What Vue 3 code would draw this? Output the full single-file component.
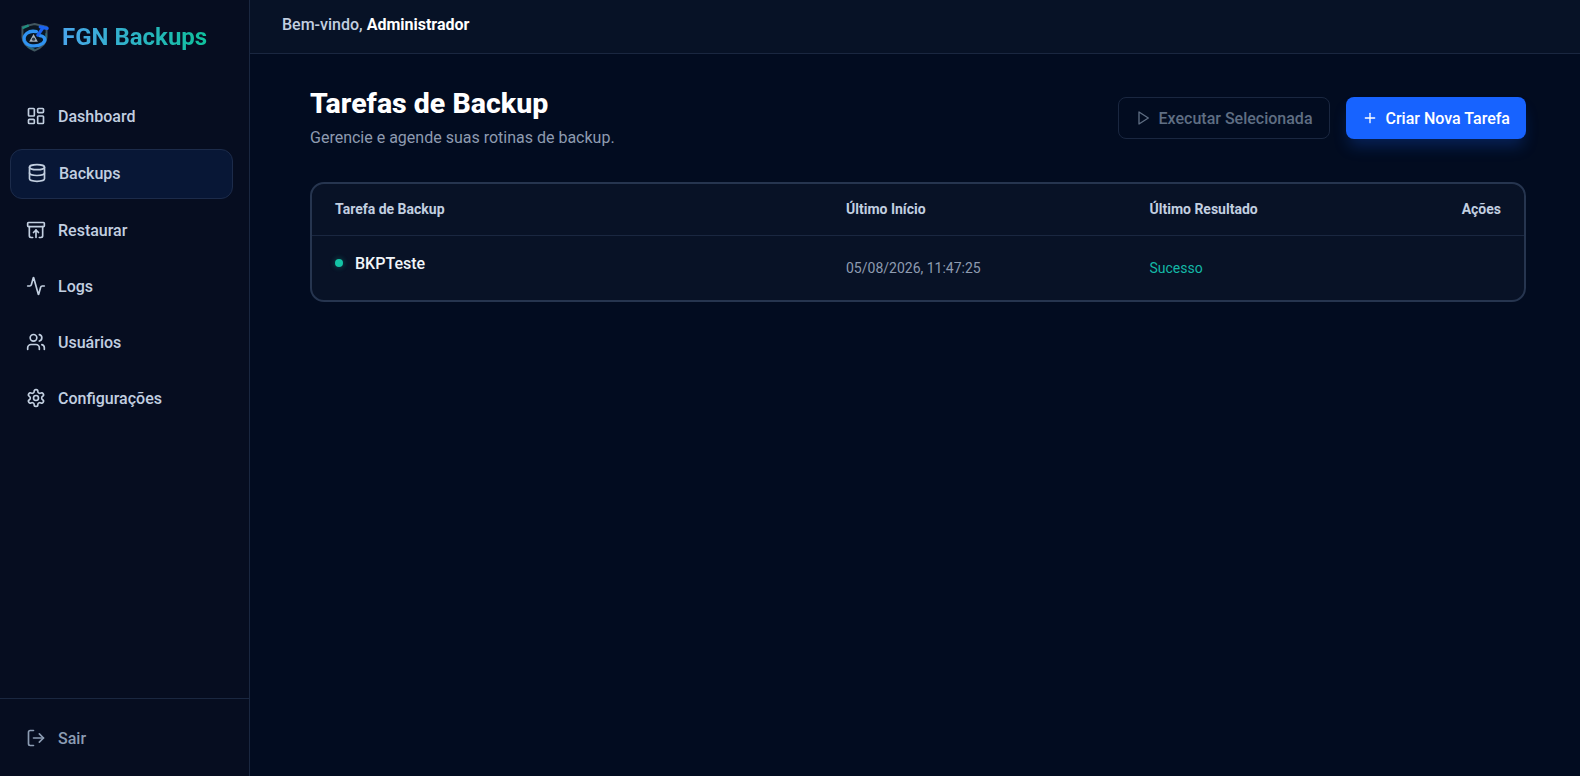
<template>
  <div class="app-shell">
    <aside class="sidebar">
      <div class="brand">
        <svg class="brand-logo" viewBox="0 0 30 30" fill="none">
          <path d="M15 1.5 L27.5 4.5 V15 C27.5 22 21 26.5 15 29 C9 26.5 2.5 22 2.5 15 V4.5 Z" fill="#0a1622" stroke="#41565f" stroke-width="2" />
          <path d="M2.5 6 L9 3" stroke="#1f8f80" stroke-width="2.4" />
          <path d="M27 11 V18 M15 28 L8 25" stroke="#2c6a78" stroke-width="1.6" />
          <path d="M17 9.5 C9 7.5 3 13 4.5 18.5 C6.5 25 17 26 23.5 21.5 C27.5 18 25.5 14 20.5 13.5" stroke="#2f93f2" stroke-width="3.4" stroke-linecap="round" />
          <path d="M18.5 13 L24 5 M21 4.5 L28 6" stroke="#1a62f0" stroke-width="3.4" stroke-linecap="round" />
          <path d="M14 12 L18.5 20 H9.5 Z" fill="#a9b4be" />
          <circle cx="14" cy="17.2" r="1.7" fill="#2e3b48" />
        </svg>
        <span class="brand-name">FGN Backups</span>
      </div>

      <nav class="nav">
        <a class="nav-item">
          <svg class="icon" viewBox="0 0 24 24">
            <rect width="7" height="9" x="3" y="3" rx="1" />
            <rect width="7" height="5" x="14" y="3" rx="1" />
            <rect width="7" height="9" x="14" y="12" rx="1" />
            <rect width="7" height="5" x="3" y="16" rx="1" />
          </svg>
          <span>Dashboard</span>
        </a>
        <a class="nav-item active">
          <svg class="icon" viewBox="0 0 24 24">
            <ellipse cx="12" cy="5" rx="9" ry="3" />
            <path d="M3 5V19A9 3 0 0 0 21 19V5" />
            <path d="M3 12A9 3 0 0 0 21 12" />
          </svg>
          <span>Backups</span>
        </a>
        <a class="nav-item">
          <svg class="icon" viewBox="0 0 24 24">
            <rect width="20" height="5" x="2" y="3" rx="1" />
            <path d="M4 8v11a2 2 0 0 0 2 2h2" />
            <path d="M20 8v11a2 2 0 0 1-2 2h-2" />
            <path d="m9 15 3-3 3 3" />
            <path d="M12 12v9" />
          </svg>
          <span>Restaurar</span>
        </a>
        <a class="nav-item">
          <svg class="icon" viewBox="0 0 24 24">
            <path d="M22 12h-2.48a2 2 0 0 0-1.93 1.46l-2.35 8.36a.25.25 0 0 1-.48 0L9.24 2.18a.25.25 0 0 0-.48 0l-2.35 8.36A2 2 0 0 1 4.49 12H2" />
          </svg>
          <span>Logs</span>
        </a>
        <a class="nav-item">
          <svg class="icon" viewBox="0 0 24 24">
            <path d="M16 21v-2a4 4 0 0 0-4-4H6a4 4 0 0 0-4 4v2" />
            <circle cx="9" cy="7" r="4" />
            <path d="M22 21v-2a4 4 0 0 0-3-3.87" />
            <path d="M16 3.13a4 4 0 0 1 0 7.75" />
          </svg>
          <span>Usuários</span>
        </a>
        <a class="nav-item">
          <svg class="icon" viewBox="0 0 24 24">
            <path d="M12.22 2h-.44a2 2 0 0 0-2 2v.18a2 2 0 0 1-1 1.73l-.43.25a2 2 0 0 1-2 0l-.15-.08a2 2 0 0 0-2.73.73l-.22.38a2 2 0 0 0 .73 2.73l.15.1a2 2 0 0 1 1 1.72v.51a2 2 0 0 1-1 1.74l-.15.09a2 2 0 0 0-.73 2.73l.22.38a2 2 0 0 0 2.73.73l.15-.08a2 2 0 0 1 2 0l.43.25a2 2 0 0 1 1 1.73V20a2 2 0 0 0 2 2h.44a2 2 0 0 0 2-2v-.18a2 2 0 0 1 1-1.73l.43-.25a2 2 0 0 1 2 0l.15.08a2 2 0 0 0 2.73-.73l.22-.39a2 2 0 0 0-.73-2.73l-.15-.08a2 2 0 0 1-1-1.74v-.5a2 2 0 0 1 1-1.74l.15-.09a2 2 0 0 0 .73-2.73l-.22-.38a2 2 0 0 0-2.73-.73l-.15.08a2 2 0 0 1-2 0l-.43-.25a2 2 0 0 1-1-1.73V4a2 2 0 0 0-2-2z" />
            <circle cx="12" cy="12" r="3" />
          </svg>
          <span>Configurações</span>
        </a>
      </nav>

      <div class="sidebar-footer">
        <a class="nav-item logout">
          <svg class="icon" viewBox="0 0 24 24">
            <path d="M9 21H5a2 2 0 0 1-2-2V5a2 2 0 0 1 2-2h4" />
            <polyline points="16 17 21 12 16 7" />
            <line x1="21" y1="12" x2="9" y2="12" />
          </svg>
          <span>Sair</span>
        </a>
      </div>
    </aside>

    <div class="main">
      <header class="topbar">Bem-vindo, <strong>Administrador</strong></header>

      <main class="content">
        <div class="page-head">
          <div>
            <h1>Tarefas de Backup</h1>
            <p>Gerencie e agende suas rotinas de backup.</p>
          </div>
          <div class="actions">
            <button class="btn btn-ghost" disabled>
              <svg class="btn-icon" viewBox="0 0 24 24"><polygon points="6 3 20 12 6 21 6 3" /></svg>
              Executar Selecionada
            </button>
            <button class="btn btn-primary">
              <svg class="btn-icon" viewBox="0 0 24 24"><path d="M5 12h14" /><path d="M12 5v14" /></svg>
              Criar Nova Tarefa
            </button>
          </div>
        </div>

        <div class="table-card">
          <table>
            <colgroup>
              <col class="col-name" />
              <col class="col-start" />
              <col class="col-result" />
              <col />
            </colgroup>
            <thead>
              <tr>
                <th>Tarefa de Backup</th>
                <th>Último Início</th>
                <th>Último Resultado</th>
                <th class="right">Ações</th>
              </tr>
            </thead>
            <tbody>
              <tr v-for="task in tasks" :key="task.name">
                <td>
                  <div class="task-name"><span class="dot"></span>{{ task.name }}</div>
                </td>
                <td class="muted">{{ task.lastStart }}</td>
                <td class="success">{{ task.result }}</td>
                <td></td>
              </tr>
            </tbody>
          </table>
        </div>
      </main>
    </div>
  </div>
</template>

<script setup>
const tasks = [{ name: 'BKPTeste', lastStart: '05/08/2026, 11:47:25', result: 'Sucesso' }]
</script>

<style>
html,
body {
  margin: 0;
  background: #020c20;
}
</style>

<style scoped>
.app-shell {
  display: flex;
  height: 776px;
  overflow: hidden;
  font-family: Roboto, "Liberation Sans", sans-serif;
  background: #020c20;
}

.sidebar {
  width: 249px;
  flex-shrink: 0;
  display: flex;
  flex-direction: column;
  background: #060d20;
  border-right: 1px solid #1a2740;
}

.brand {
  height: 74px;
  display: flex;
  align-items: center;
  gap: 13px;
  padding-left: 20px;
}

.brand-logo {
  width: 29px;
  height: 30px;
}

.brand-name {
  font-size: 24px;
  font-weight: 700;
  background: linear-gradient(90deg, #4aa6ec, #0fc09c);
  -webkit-background-clip: text;
  background-clip: text;
  color: transparent;
}

.nav {
  flex: 1;
  display: flex;
  flex-direction: column;
  gap: 8px;
  padding: 18px 16px 0 10px;
}

.nav-item {
  height: 48px;
  display: flex;
  align-items: center;
  gap: 12px;
  padding: 0 16px;
  font-size: 16px;
  font-weight: 500;
  color: #c2cfe0;
  border-radius: 12px;
}

.nav-item.active {
  box-sizing: border-box;
  height: 50px;
  margin: 1px 0 -1px;
  padding-bottom: 2px;
  background: #081736;
  border: 1px solid #1c2b4a;
}

.icon,
.btn-icon {
  fill: none;
  stroke: currentColor;
  stroke-width: 2;
  stroke-linecap: round;
  stroke-linejoin: round;
  flex-shrink: 0;
}

.icon {
  width: 20px;
  height: 20px;
}

.sidebar-footer {
  padding: 15px 16px 14px 10px;
  border-top: 1px solid #1a2740;
  margin-top: auto;
}

.logout {
  color: #8c9cb3;
}

.main {
  flex: 1;
  min-width: 0;
  display: flex;
  flex-direction: column;
}

.topbar {
  height: 49px;
  flex-shrink: 0;
  display: flex;
  align-items: center;
  gap: 4px;
  padding: 0 32px 4px;
  font-size: 16px;
  font-weight: 500;
  color: #c2cfe0;
  background: #071226;
  border-bottom: 1px solid #1a2740;
}

.topbar strong {
  font-weight: 700;
  color: #fff;
}

.content {
  flex: 1;
  padding: 32px 54px 0 60px;
}

.page-head {
  display: flex;
  justify-content: space-between;
  align-items: center;
  margin-bottom: 32px;
}

h1 {
  margin: 0;
  font-size: 28.5px;
  line-height: 36px;
  font-weight: 800;
  color: #fff;
}

.page-head p {
  margin: 4px 0 0;
  font-size: 16px;
  line-height: 24px;
  color: #8e9bb0;
}

.actions {
  display: flex;
  gap: 16px;
}

.btn {
  height: 42px;
  display: flex;
  align-items: center;
  gap: 8px;
  padding: 0 16px;
  font-family: inherit;
  font-size: 16px;
  font-weight: 500;
  border-radius: 8px;
  border: 1px solid transparent;
}

.btn-icon {
  width: 16px;
  height: 16px;
}

.btn-ghost {
  color: #5f6e83;
  background: transparent;
  border-color: #1a2740;
}

.btn-primary {
  padding: 0 15px;
  color: #fff;
  background: #1763ff;
  box-shadow: 0 10px 15px -3px rgba(23, 99, 255, 0.25);
}

.table-card {
  background: #081226;
  border: 2px solid #26354f;
  border-radius: 14px;
  overflow: hidden;
}

table {
  width: 100%;
  border-collapse: collapse;
  table-layout: fixed;
}

.col-name {
  width: 511px;
}

.col-start {
  width: 303.5px;
}

.col-result {
  width: 250px;
}

th {
  height: 51px;
  padding: 0 23px;
  box-sizing: border-box;
  font-size: 14px;
  font-weight: 700;
  text-align: left;
  color: #c2cfe0;
  border-bottom: 1px solid #1a2740;
}

th.right {
  text-align: right;
}

td {
  height: 64px;
  padding: 0 23px;
  font-size: 14px;
}

.task-name {
  display: flex;
  align-items: center;
  gap: 12px;
  margin-top: -9px;
  font-size: 16px;
  font-weight: 500;
  color: #f1f5f9;
}

.dot {
  width: 8px;
  height: 8px;
  border-radius: 50%;
  background: #14c4a6;
  box-shadow: 0 0 4px 2px rgba(20, 196, 166, 0.18);
}

.muted {
  color: #8e9bb0;
}

.success {
  color: #14b8a6;
}
</style>
